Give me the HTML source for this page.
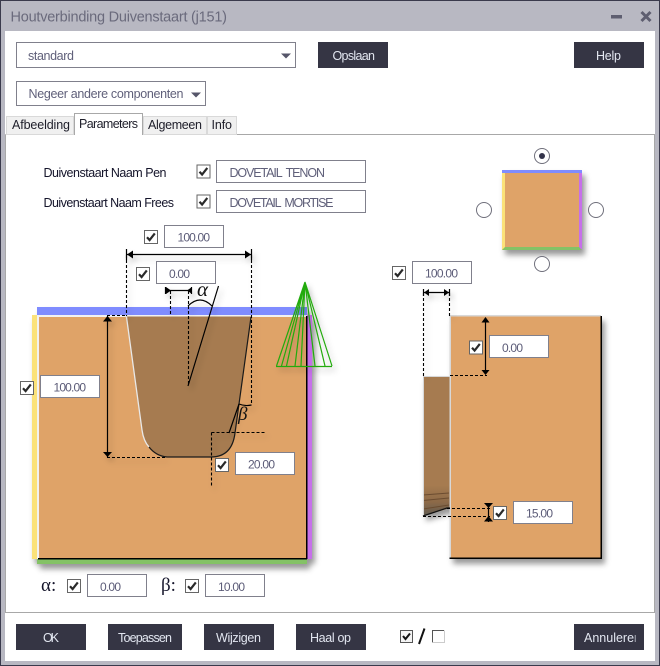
<!DOCTYPE html>
<html><head><meta charset="utf-8"><style>
html,body{margin:0;padding:0;background:#fff;width:660px;height:666px;overflow:hidden}
svg{display:block}
text{font-family:"Liberation Sans",sans-serif;white-space:pre}
.v{font-size:12px;fill:#5c5c78}
.l{font-size:12.5px;fill:#14142a}
.b{font-size:12.5px;fill:#e2e6f0}
.t{font-size:12.5px;fill:#1e1e2a}
.g{font-size:12.5px;fill:#60607a}
.f{fill:#fff;stroke:#80808c;stroke-width:1}
.d{fill:none;stroke:#000;stroke-width:1.1;stroke-dasharray:3 2}
.s{fill:none;stroke:#000;stroke-width:1.2}
</style></head><body>
<svg width="660" height="666" viewBox="0 0 660 666" xmlns="http://www.w3.org/2000/svg">
<defs>
<filter id="sh" x="-20%" y="-20%" width="140%" height="140%"><feDropShadow dx="3" dy="5" stdDeviation="3" flood-color="#000" flood-opacity=".4"/></filter>
<filter id="ls" x="-20%" y="-20%" width="150%" height="150%"><feDropShadow dx="3" dy="4" stdDeviation="3" flood-color="#000" flood-opacity=".22"/></filter>
<linearGradient id="pk" x1="0" y1="0" x2="0" y2="1"><stop offset="0" stop-color="#a67b50"/><stop offset=".78" stop-color="#a67b50"/><stop offset=".9" stop-color="#8c6a48"/><stop offset="1" stop-color="#5f5a50"/></linearGradient>
<g id="cb"><rect x=".5" y=".5" width="13" height="13" fill="#fff" stroke="#666" stroke-width="1"/><path d="M3 7.2 5.6 10 10.8 3.4" fill="none" stroke="#2a2a2a" stroke-width="2.2"/></g>
</defs>

<!-- window frame -->
<rect width="660" height="666" fill="#3a3a4c"/>
<rect x="1" y="1" width="658" height="664" fill="#b8b8c2"/>
<rect x="5" y="31" width="650" height="630" fill="#fff"/>
<text x="10.5" y="21.5" font-size="14.5" fill="#6a6a7c" textLength="216.5" lengthAdjust="spacing">Houtverbinding Duivenstaart (j151)</text>
<rect x="611" y="15" width="11" height="3.5" fill="#5e5e70"/>
<path d="M641.5 12 650.5 21M650.5 12 641.5 21" stroke="#5e5e70" stroke-width="3" fill="none"/>

<!-- combos -->
<rect x="16.5" y="42.5" width="279" height="25" fill="#fff" stroke="#80808c"/>
<text x="28" y="60" class="g" textLength="46" lengthAdjust="spacing">standard</text>
<path d="M281 53.5h10l-5 5z" fill="#56566a"/>
<rect x="16.5" y="81.5" width="189" height="24" fill="#fff" stroke="#80808c"/>
<text x="28.5" y="98" class="g" textLength="155" lengthAdjust="spacing">Negeer andere componenten</text>
<path d="M191 92.5h10l-5 5z" fill="#56566a"/>

<!-- top buttons -->
<rect x="318" y="42" width="70" height="26" fill="#353544"/>
<text x="332.5" y="60" class="b" textLength="42.5" lengthAdjust="spacing">Opslaan</text>
<rect x="574" y="42" width="70" height="26" fill="#353544"/>
<text x="596" y="60" class="b" textLength="25" lengthAdjust="spacing">Help</text>

<!-- panel -->
<path d="M5.5 134.5H654.5V612.5H5" fill="#fff" stroke="#a8a8a8"/>
<path d="M5.5 134.5V612.5" stroke="#a8a8a8" fill="none"/>
<!-- tabs -->
<rect x="6.5" y="116.5" width="67" height="18" fill="#f0f0f0" stroke="#d9d9d9"/>
<rect x="143.5" y="116.5" width="63" height="18" fill="#f0f0f0" stroke="#d9d9d9"/>
<rect x="207.5" y="116.5" width="29" height="18" fill="#f0f0f0" stroke="#d9d9d9"/>
<path d="M74.5 135V113.5H142.5V135" fill="#fff" stroke="#a8a8a8"/>
<rect x="75" y="133" width="67" height="3" fill="#fff"/>
<text x="12" y="129" class="t" textLength="58" lengthAdjust="spacing">Afbeelding</text>
<text x="79" y="128" class="t" textLength="59" lengthAdjust="spacing">Parameters</text>
<text x="148" y="129" class="t" textLength="54" lengthAdjust="spacing">Algemeen</text>
<text x="211.5" y="129" class="t" textLength="20.5" lengthAdjust="spacing">Info</text>

<!-- name rows -->
<text x="43.5" y="177" class="l" textLength="123" lengthAdjust="spacing">Duivenstaart Naam Pen</text>
<text x="43.5" y="207" class="l" textLength="130.5" lengthAdjust="spacing">Duivenstaart Naam Frees</text>
<use href="#cb" x="196.5" y="164.5"/>
<use href="#cb" x="196.5" y="194.5"/>
<rect x="216.5" y="160.5" width="149" height="22" class="f"/>
<rect x="216.5" y="190.5" width="149" height="22" class="f"/>
<text x="229.5" y="177" class="g" textLength="95.5" lengthAdjust="spacing">DOVETAIL  TENON</text>
<text x="229.5" y="207" class="g" textLength="104" lengthAdjust="spacing">DOVETAIL  MORTISE</text>

<!-- preview square -->
<g filter="url(#sh)">
<rect x="502" y="170" width="80" height="80" fill="#dfa368"/>
</g>
<path d="M502 170V250H505V173Z" fill="#fbe27a"/>
<path d="M582 170V250H579V173Z" fill="#c670ea"/>
<rect x="502" y="170" width="80" height="3" fill="#7f8cff"/>
<path d="M505 247H579L582 250H502Z" fill="#84c266"/>
<circle cx="542" cy="156" r="7.5" fill="#fff" stroke="#70707c"/>
<circle cx="542" cy="156" r="3" fill="#33334a"/>
<circle cx="484" cy="210" r="7.5" fill="#fff" stroke="#70707c"/>
<circle cx="596" cy="210" r="7.5" fill="#fff" stroke="#70707c"/>
<circle cx="542" cy="264" r="7.5" fill="#fff" stroke="#70707c"/>

<!-- main drawing -->
<g filter="url(#sh)">
<path d="M37 307H307V315H312V559H307V564H37V559H32V315H37Z" fill="#dfa368"/>
</g>
<rect x="32" y="315" width="5" height="244" fill="#fbe27a"/>
<rect x="37" y="307" width="270" height="8" fill="#7f8cff"/>
<rect x="307" y="315" width="5" height="244" fill="#c670ea"/>
<rect x="37" y="559" width="270" height="5" fill="#84c266"/>
<rect x="37" y="315" width="270" height="244" fill="#dfa368"/>
<rect x="37" y="315" width="270" height="2" fill="#f2f2f2"/>
<rect x="37" y="315" width="2" height="244" fill="#f2f2f2"/>
<rect x="306" y="316" width="1.5" height="243" fill="#000"/>
<rect x="38" y="558" width="269" height="1.5" fill="#000"/>
<!-- pocket -->
<path d="M126.5 316.5H251L235 433Q232 457 211 457H167Q156 456 149 447Q143.500 441 142 430Z" fill="#a67b50"/>
<path d="M126.500 317 142 430Q143.500 441 149 447" fill="none" stroke="#e8e8e8" stroke-width="1.3"/>
<path d="M149 447Q156 456 167 457H211Q232 457 235 433L251 317" fill="none" stroke="#1a1a1a" stroke-width="1.2"/>

<!-- green cone -->
<g filter="url(#ls)" fill="none" stroke="#22aa0a" stroke-width="1.2">
<path d="M276 366.500H332" stroke-width="1.2"/>
<path d="M305 282 276.500 366M305 282 281.500 366M305 282 286.500 366M305 282 295 366M305 282 301 366M305 282 315 366M305 282 325 366M305 282 332 366"/>
<path d="M303.500 286 306.500 286M303 289H307" stroke-width="1.5"/>
</g>

<!-- dims left -->
<g filter="url(#ls)">
<path d="M126 254.500H251" class="s"/>
<path d="M126.500 249V260M251.500 249V260" class="s"/>
<path d="M127 254.500 133 250.500V258.500ZM251 254.500 245 250.500V258.500Z" fill="#000"/>
<path d="M126.500 255V316M251.500 255V405M188.500 291V385M170.500 291V316M107 315.500H126M107 457.500H167M211.500 432.500V486M211.500 432.500H265" class="d"/>
<path d="M165 290.500H192M165.500 287V294M191.500 287V294" class="s"/>
<path d="M171 290.500 166 287V294ZM187 290.500 192 287V294Z" fill="#000"/>
<path d="M188 386 218.500 286M188 306Q200 294 212 306M239 404Q245 406.500 251.500 405M239 404 229 433" class="s"/>
<path d="M107.500 316V457" class="s" stroke-width="1.3"/>
<path d="M107.500 316 103 321.500H112ZM107.500 457 103 452H112Z" fill="#000"/>
</g>
<text x="197" y="296" font-size="21" font-style="italic" style="font-family:'Liberation Serif',serif" fill="#111">α</text>
<text x="238" y="420" font-size="19" font-style="italic" style="font-family:'Liberation Serif',serif" fill="#111">β</text>

<!-- main fields -->
<use href="#cb" x="144" y="230"/><rect x="164.5" y="225.5" width="59" height="22" class="f"/>
<text x="177.5" y="241.5" class="v" textLength="32.5" lengthAdjust="spacing">100.00</text>
<use href="#cb" x="136" y="267"/><rect x="156.5" y="261.5" width="59" height="22" class="f"/>
<text x="169" y="278" class="v" textLength="21" lengthAdjust="spacing">0.00</text>
<use href="#cb" x="20" y="381"/><rect x="40.5" y="375.5" width="59" height="22" class="f"/>
<text x="53.5" y="391.5" class="v" textLength="32.5" lengthAdjust="spacing">100.00</text>
<use href="#cb" x="215" y="458"/><rect x="235.5" y="452.5" width="59" height="22" class="f"/>
<text x="248" y="468.5" class="v" textLength="27" lengthAdjust="spacing">20.00</text>

<!-- bottom alpha/beta -->
<text x="41" y="591" font-size="19" style="font-family:'Liberation Serif',serif" fill="#14142a">α:</text>
<use href="#cb" x="67" y="579"/><rect x="87.5" y="574.5" width="59" height="22" class="f"/>
<text x="100" y="591" class="v" textLength="21" lengthAdjust="spacing">0.00</text>
<text x="161" y="591" font-size="19" style="font-family:'Liberation Serif',serif" fill="#14142a">β:</text>
<use href="#cb" x="185" y="579"/><rect x="205.5" y="574.5" width="59" height="22" class="f"/>
<text x="218" y="591" class="v" textLength="27" lengthAdjust="spacing">10.00</text>

<!-- right drawing -->
<g filter="url(#sh)">
<path d="M423 376H450V508L423 516Z" fill="#a67b50"/>
<rect x="450" y="316" width="152" height="243" fill="#dfa368"/>
</g>
<path d="M423 376.500H450V508H447L423 516Z" fill="url(#pk)"/>
<path d="M423 495 449 493M423 500.500 449 498M423 509 449 505" stroke="#6b4c30" stroke-width="1" fill="none"/>
<path d="M423.500 516V376.500H450" fill="none" stroke="#d8d8d8"/>
<rect x="450" y="315" width="151" height="243" fill="#dfa368"/>
<rect x="450" y="315" width="151" height="1.5" fill="#d8d8d8"/>
<rect x="449.5" y="315" width="1.5" height="243" fill="#d8d8d8"/>
<rect x="600.5" y="316" width="1.5" height="243" fill="#000"/>
<rect x="449.5" y="557.5" width="152.5" height="1.5" fill="#000"/>
<path d="M423 516 447 508H450" fill="none" stroke="#111" stroke-width="1.2"/>
<g filter="url(#ls)">
<path d="M423 292.500H449M423.500 289V296M449.500 289V296" class="s"/>
<path d="M424 292.500 429 289V296ZM449 292.500 444 289V296Z" fill="#000"/>
<path d="M423.500 293V376M449.500 293V316" class="d"/>
</g>
<path d="M450 375.500H487M447 508.500H490M423 516.500H490" class="d"/>
<path d="M485.500 318V374" class="s"/>
<path d="M485.500 317 481.500 322.500H489.500ZM485.500 375 481.500 370H489.500Z" fill="#000"/>
<path d="M488.500 503V522" class="s"/>
<path d="M488.500 508 484 503H493ZM488.500 516 484 521.500H493Z" fill="#000"/>

<use href="#cb" x="392" y="266"/><rect x="412.5" y="261.5" width="59" height="22" class="f"/>
<text x="425" y="277.5" class="v" textLength="33" lengthAdjust="spacing">100.00</text>
<use href="#cb" x="469" y="340.5"/><rect x="489.5" y="335.5" width="59" height="22" class="f"/>
<text x="502" y="352" class="v" textLength="21" lengthAdjust="spacing">0.00</text>
<use href="#cb" x="493" y="506"/><rect x="513.5" y="501.5" width="59" height="22" class="f"/>
<text x="526" y="517.5" class="v" textLength="27" lengthAdjust="spacing">15.00</text>

<!-- bottom buttons -->
<rect x="16" y="624" width="70" height="26" fill="#353544"/>
<text x="43" y="642" class="b" textLength="16" lengthAdjust="spacing">OK</text>
<rect x="108" y="624" width="74" height="26" fill="#353544"/>
<text x="118" y="642" class="b" textLength="54" lengthAdjust="spacing">Toepassen</text>
<rect x="204" y="624" width="70" height="26" fill="#353544"/>
<text x="216" y="642" class="b" textLength="45" lengthAdjust="spacing">Wijzigen</text>
<rect x="296" y="624" width="70" height="26" fill="#353544"/>
<text x="310" y="642" class="b" textLength="41" lengthAdjust="spacing">Haal op</text>
<rect x="574" y="624" width="70" height="26" fill="#353544"/>
<svg x="580" y="624" width="55.5" height="26" viewBox="580 624 55.500 26"><text x="584" y="642" class="b" textLength="57" lengthAdjust="spacing">Annuleren</text></svg>

<!-- check all / none -->
<rect x="400.5" y="630.5" width="12" height="12" fill="#f4f4f4" stroke="#555"/>
<path d="M403 636 405.500 639 410 633.500" fill="none" stroke="#111" stroke-width="2"/>
<path d="M424.500 628.500 419 644" stroke="#111" stroke-width="2" fill="none"/>
<path d="M432.500 642.500V630.500H444" fill="none" stroke="#555"/>
<path d="M444.500 630.500V642.500H432.500" fill="none" stroke="#ccc"/>
</svg>
</body></html>
